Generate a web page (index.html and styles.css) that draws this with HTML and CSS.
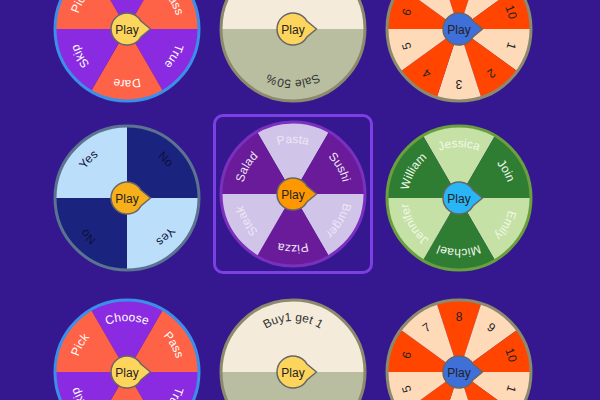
FILE: index.html
```html
<!DOCTYPE html>
<html lang="en">
<head>
    <meta charset="UTF-8">
    <meta name="viewport" content="width=device-width, initial-scale=1.0">
    <title>Spin Wheels</title>
    <link rel="stylesheet" href="styles.css">
</head>
<body>
    <div class="gallery" id="gallery"></div>
    <script>
const gallery = document.getElementById('gallery');
const SVG_NS = 'http://www.w3.org/2000/svg';
const R = 72;
const TEXT_R = 51;

// Wheel templates
const truthOrDare = {
    labels: ['Choose', 'Pass', 'True', 'Dare', 'Skip', 'Pick'],
    colors: ['#8a2be2', '#ff6347'],
    text: '#ffffff', rim: '#3b8fe8', play: '#fdd55c', start: -90
};
const coupon = {
    labels: ['Buy1 get 1', 'Sale 50%'],
    colors: ['#f4ebda', '#b9bea0'],
    text: '#333333', rim: '#8b8a6c', play: '#fdd55c', start: -90
};
const numbers = {
    labels: ['8', '9', '10', '1', '2', '3', '4', '5', '6', '7'],
    colors: ['#ff4500', '#ffdab9'],
    text: '#222222', rim: '#8c8a6e', play: '#3f6fd9', start: -90
};

const wheels = [
    truthOrDare,
    coupon,
    numbers,
    {
        labels: ['Yes', 'No', 'Yes', 'No'],
        colors: ['#bbdefb', '#1a237e'],
        text: '#0c1038', rim: '#5b7291', play: '#f7b01a', start: -135
    },
    {
        labels: ['Pasta', 'Sushi', 'Burger', 'Pizza', 'Steak', 'Salad'],
        colors: ['#d1c4e9', '#6a1b9a'],
        text: '#ede7f6', rim: '#7b2fbf', play: '#ff9800', start: -90,
        selected: true
    },
    {
        labels: ['Jessica', 'Join', 'Emily', 'Michael', 'Jennifer', 'William'],
        colors: ['#c5e1a5', '#2e7d32'],
        text: '#f1f8e9', rim: '#6a9f3e', play: '#29b6f6', start: -90
    },
    truthOrDare,
    coupon,
    numbers
];

function el(name, attrs) {
    const node = document.createElementNS(SVG_NS, name);
    for (let key in attrs) {
        node.setAttribute(key, attrs[key]);
    }
    return node;
}

function point(radius, deg) {
    const rad = deg * Math.PI / 180;
    return (radius * Math.cos(rad)).toFixed(2) + ' ' + (radius * Math.sin(rad)).toFixed(2);
}

function buildWheel(wheel, n) {
    const svg = el('svg', { width: 148, height: 148, viewBox: '-74 -74 148 148', class: 'wheel' });
    const defs = el('defs', {});
    svg.appendChild(defs);
    const step = 360 / wheel.labels.length;

    wheel.labels.forEach((label, i) => {
        const mid = wheel.start + i * step;
        const a0 = mid - step / 2;
        const a1 = mid + step / 2;
        const large = step > 180 ? 1 : 0;
        svg.appendChild(el('path', {
            d: 'M0 0 L' + point(R, a0) + ' A' + R + ' ' + R + ' 0 ' + large + ' 1 ' + point(R, a1) + ' Z',
            fill: wheel.colors[i % 2]
        }));

        // label follows the rim, clockwise
        const id = 'arc-' + n + '-' + i;
        defs.appendChild(el('path', {
            id: id,
            d: 'M' + point(TEXT_R, mid - 80) + ' A' + TEXT_R + ' ' + TEXT_R + ' 0 0 1 ' + point(TEXT_R, mid + 80)
        }));
        const text = el('text', { class: 'label', fill: wheel.text });
        const tp = el('textPath', { href: '#' + id, startOffset: '50%', 'text-anchor': 'middle' });
        tp.textContent = label;
        text.appendChild(tp);
        svg.appendChild(text);
    });

    svg.appendChild(el('circle', { r: 72, fill: 'none', stroke: wheel.rim, 'stroke-width': 3 }));

    // play button with a pointer on the right
    svg.appendChild(el('path', {
        d: 'M23.5 0 L13.86 8 A16 16 0 1 1 13.86 -8 Z',
        fill: wheel.play, stroke: '#666', 'stroke-width': 1.5, 'stroke-linejoin': 'round'
    }));
    const play = el('text', { class: 'play', x: 0, y: 4.5, 'text-anchor': 'middle' });
    play.textContent = 'Play';
    svg.appendChild(play);
    return svg;
}

wheels.forEach((wheel, n) => {
    const card = document.createElement('div');
    card.className = wheel.selected ? 'card selected' : 'card';
    card.appendChild(buildWheel(wheel, n));
    gallery.appendChild(card);
});
    </script>
</body>
</html>
```

FILE: styles.css
```css
body {
    margin: 0;
    height: 100vh;
    overflow: hidden;
    background-color: #35178f;
    font-family: "Liberation Sans", Arial, sans-serif;
}

.gallery {
    display: grid;
    grid-template-columns: repeat(3, 160px);
    grid-template-rows: 169px 174px 160px;
    column-gap: 6px;
    padding-left: 47px;
    margin-top: -51px;
}

.card {
    width: 160px;
    height: 160px;
    box-sizing: border-box;
    border: 3px solid transparent;
    border-radius: 10px;
    display: flex;
    justify-content: center;
    align-items: center;
    cursor: pointer;
}

.card.selected {
    border-color: #7b3fe4;
    transform: translateY(-4px);
}

.wheel {
    display: block;
}

.label {
    font-size: 12px;
}

.play {
    font-size: 12px;
    fill: #222;
}
```
